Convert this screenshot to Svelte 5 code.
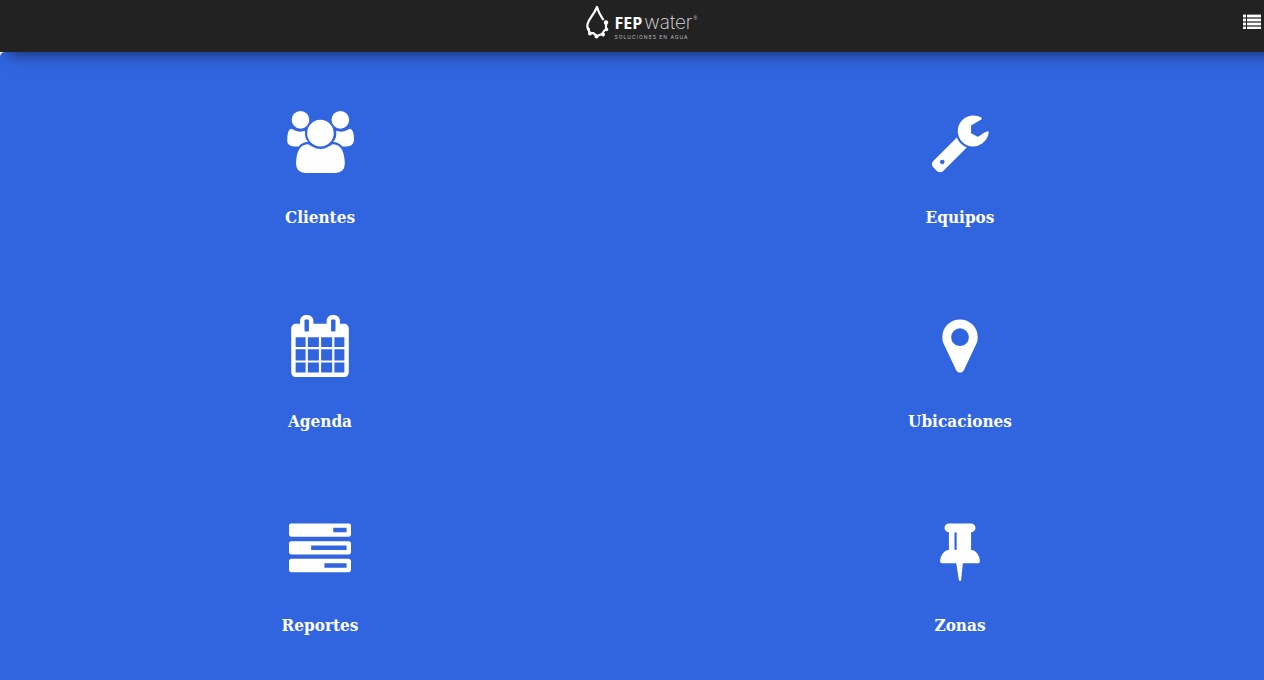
<script>
  const sections = [
    {
      name: 'Clientes',
      href: '#clientes',
      width: 2048,
      path: 'M657 896q-162 5-265 128h-134q-82 0-138-40.5t-56-118.5q0-353 124-353 6 0 43.5 21t97.5 42.5 119 21.5q67 0 133-23-5 37-5 66 0 159 93 256zm1071 637q0 120-73 189.5t-194 69.5h-874q-121 0-194-69.5t-73-189.5q0-53 3.5-103.5t14-109 26.5-108.5 43-97.5 62-81 85.5-53.5 111.5-20q10 0 43 21.5t73 48 107 48 135 21.5 135-21.5 107-48 73-48 43-21.5q61 0 111.5 20t85.5 53.5 62 81 43 97.5 26.5 108.5 14 109 3.5 103.5zm-1024-1277q0 106-75 181t-181 75-181-75-75-181 75-181 181-75 181 75 75 181zm704 384q0 159-112.5 271.5t-271.5 112.5-271.5-112.5-112.5-271.5 112.5-271.5 271.5-112.5 271.5 112.5 112.5 271.5zm576 225q0 78-56 118.5t-138 40.5h-134q-103-123-265-128 93-97 93-256 0-29-5-66 66 23 133 23 59 0 119-21.5t97.5-42.5 43.5-21q124 0 124 353zm-128-609q0 106-75 181t-181 75-181-75-75-181 75-181 181-75 181 75 75 181z'
    },
    {
      name: 'Equipos',
      href: '#equipos',
      width: 1792,
      path: 'M448 1472q0-26-19-45t-45-19-45 19-19 45 19 45 45 19 45-19 19-45zm644-420l-682 682q-37 37-90 37-52 0-91-37l-106-108q-38-36-38-90 0-53 38-91l681-681q39 98 114.5 173.5t173.5 114.5zm634-435q0 39-23 106-47 134-164.5 217.5t-258.5 83.5q-185 0-316.5-131.5t-131.5-316.5 131.5-316.5 316.5-131.5q58 0 121.5 16.5t107.5 46.5q16 11 16 28t-16 28l-293 169v224l193 107q5-3 79-48.5t135.5-81 70.5-35.5q15 0 23.5 10t8.5 25z'
    },
    {
      name: 'Agenda',
      href: '#agenda',
      width: 1792,
      path: 'M192 1664h288v-288h-288v288zm352 0h320v-288h-320v288zm-352-352h288v-320h-288v320zm352 0h320v-320h-320v320zm-352-384h288v-288h-288v288zm736 736h320v-288h-320v288zm-384-736h320v-288h-320v288zm768 736h288v-288h-288v288zm-384-352h320v-320h-320v320zm-352-864v-288q0-13-9.5-22.5t-22.5-9.5h-64q-13 0-22.5 9.5t-9.5 22.5v288q0 13 9.5 22.5t22.5 9.5h64q13 0 22.5-9.5t9.5-22.5zm736 864h288v-320h-288v320zm-384-384h320v-288h-320v288zm384 0h288v-288h-288v288zm32-480v-288q0-13-9.5-22.5t-22.5-9.5h-64q-13 0-22.5 9.5t-9.5 22.5v288q0 13 9.5 22.5t22.5 9.5h64q13 0 22.5-9.5t9.5-22.5zm384-64v1280q0 52-38 90t-90 38h-1408q-52 0-90-38t-38-90v-1280q0-52 38-90t90-38h128v-96q0-66 47-113t113-47h64q66 0 113 47t47 113v96h384v-96q0-66 47-113t113-47h64q66 0 113 47t47 113v96h128q52 0 90 38t38 90z'
    },
    {
      name: 'Ubicaciones',
      href: '#ubicaciones',
      width: 1792,
      path: 'M1152 640q0-106-75-181t-181-75-181 75-75 181 75 181 181 75 181-75 75-181zm256 0q0 109-33 179l-364 774q-16 33-47.5 52t-67.5 19-67.5-19-46.5-52l-365-774q-33-70-33-179 0-212 150-362t362-150 362 150 150 362z'
    },
    {
      name: 'Reportes',
      href: '#reportes',
      width: 1792,
      path: 'M1024 1408h640v-128h-640v128zm-384-512h1024v-128h-1024v128zm640-512h384v-128h-384v128zm512 832v256q0 26-19 45t-45 19h-1664q-26 0-45-19t-19-45v-256q0-26 19-45t45-19h1664q26 0 45 19t19 45zm0-512v256q0 26-19 45t-45 19h-1664q-26 0-45-19t-19-45v-256q0-26 19-45t45-19h1664q26 0 45 19t19 45zm0-512v256q0 26-19 45t-45 19h-1664q-26 0-45-19t-19-45v-256q0-26 19-45t45-19h1664q26 0 45 19t19 45z'
    },
    {
      name: 'Zonas',
      href: '#zonas',
      width: 1792,
      path: 'M800 864v-448q0-14-9-23t-23-9-23 9-9 23v448q0 14 9 23t23 9 23-9 9-23zm672 352q0 26-19 45t-45 19h-429l-51 483q-2 12-10.5 20.5t-20.5 8.5h-1q-27 0-32-27l-76-485h-404q-26 0-45-19t-19-45q0-123 78.5-221.5t177.5-98.5v-512q-52 0-90-38t-38-90 38-90 90-38h640q52 0 90 38t38 90-38 90-90 38v512q99 0 177.5 98.5t78.5 221.5z'
    }
  ];
</script>

<div class="page">
  <header>
    <a class="brand" href="#inicio" aria-label="FEP water, soluciones en agua">
      <svg class="drop" viewBox="0 0 24 34" aria-hidden="true">
        <path d="M2 24C-1 17 7 12 11 2C13 9 15 11 17.500 15" />
        <path d="M2 24L4 28L7 28L11 31L16 29L18 26L20 24L20 18" />
        <circle cx="2.500" cy="24" r="1.500" />
        <circle cx="4" cy="28.500" r="2" />
        <circle cx="10.500" cy="31.500" r="2" />
        <circle cx="17" cy="29.500" r="2" />
        <circle cx="20.500" cy="24.500" r="1.800" />
        <circle cx="20" cy="17.500" r="2.200" />
      </svg>
      <span class="words">
        <span class="title"><b>FEP</b><span class="water">water</span><sup>®</sup></span>
        <span class="tagline">SOLUCIONES EN AGUA</span>
      </span>
    </a>
    <button class="menu" aria-label="Menú">
      <svg viewBox="0 0 18 15" aria-hidden="true">
        <path class="gaps" d="M0 0h3v15H0zM4 0h14v15H4z" />
        <path d="M0 1h3v2H0zM4 1h14v2H4zM0 5h3v2H0zM4 5h14v2H4zM0 9h3v2H0zM4 9h14v2H4zM0 13h3v2H0zM4 13h14v2H4z" />
      </svg>
    </button>
  </header>

  <main>
    {#each sections as section}
      <a class="tile" href={section.href}>
        <svg viewBox="0 0 {section.width} 1792" aria-hidden="true">
          <path d={section.path} />
        </svg>
        <span>{section.name}</span>
      </a>
    {/each}
  </main>
</div>

<style>
  :global(body) {
    background: #fff;
    overflow-x: hidden;
  }

  /* runs under the scrollbar gutter */
  .page {
    margin-right: -16px;
  }

  header {
    position: relative;
    z-index: 1;
    display: grid;
    grid-template-columns: 1fr auto 1fr;
    align-items: start;
    height: 52px;
    background: #222;
    box-shadow: 8px 0 16px rgba(0, 0, 0, 0.7);
  }

  .brand {
    grid-column: 2;
    display: flex;
    gap: 4px;
    padding: 5px 0 0 4px;
    color: #fff;
    text-decoration: none;
  }
  .drop {
    width: 24px;
    height: 34px;
    fill: #fff;
  }
  .drop path {
    fill: none;
    stroke: #fff;
    stroke-width: 2.2;
    stroke-linejoin: round;
  }
  .words {
    display: flex;
    flex-direction: column;
    padding-top: 8px;
  }
  .title {
    display: flex;
    font: 16px/20px "Open Sans", sans-serif;
  }
  .title b { font-weight: 700; }
  .water {
    margin-left: 2px;
    font-family: Inter, sans-serif;
    font-size: 19px;
    font-weight: 200;
    color: #ddd;
  }
  sup {
    margin-left: 1px;
    font-size: 5px;
    line-height: 10px;
    color: #aaa;
  }
  .tagline {
    font: 5px/8px Inter, sans-serif;
    letter-spacing: 1px;
    color: #bbb;
  }

  .menu {
    justify-self: end;
    margin: 14px 19px 0 0;
    padding: 0;
    border: 0;
    background: none;
    cursor: pointer;
  }
  .menu svg {
    display: block;
    width: 18px;
    height: 15px;
    fill: #fff;
  }
  .menu .gaps { fill: #777; }

  main {
    display: grid;
    grid-template-columns: 1fr 1fr;
    row-gap: 86px;
    padding: 59px 0 60px;
    border-radius: 5px;
    background: #3165e0;
  }
  .tile {
    display: flex;
    flex-direction: column;
    align-items: center;
    gap: 32px;
    color: #fff;
    text-decoration: none;
    font: bold 17px/24px "Roboto Slab", "DejaVu Serif Condensed", "DejaVu Serif", serif;
  }
  .tile svg {
    height: 62px;
    fill: #fff;
  }
</style>
